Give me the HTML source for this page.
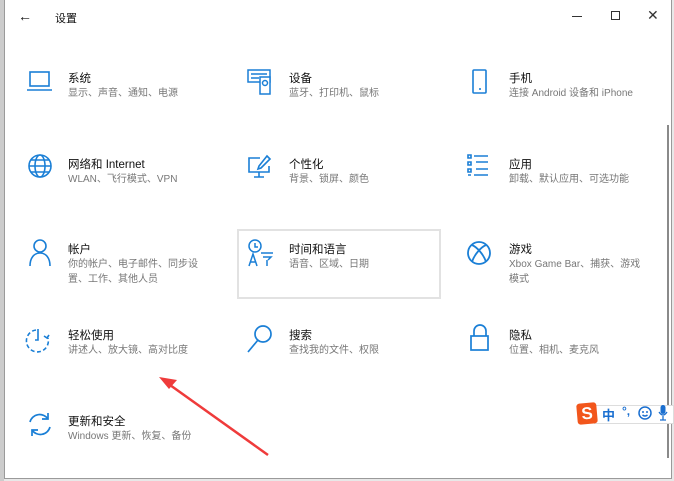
<!DOCTYPE html>
<html><head><meta charset="utf-8"><style>
*{margin:0;padding:0;box-sizing:border-box}
body{width:674px;height:481px;background:#e8e8e8;position:relative;overflow:hidden;font-family:"Liberation Sans","Noto Sans CJK SC",sans-serif}
.win{position:absolute;left:4px;top:0;width:668px;height:479px;background:#fff;border:1px solid #9a9a9a;border-top:none}
.t{position:absolute;font-size:11.5px;color:#111;white-space:nowrap}
.s{position:absolute;font-size:10px;color:#777;white-space:nowrap;line-height:15px}
svg.i{position:absolute;overflow:visible}
</style></head><body>
<div class="win"></div>
<div style="position:absolute;left:0;top:0;width:4px;height:481px;background:#ccc"></div>
<div class="t" style="left:18px;top:8px;font-size:14px">←</div>
<div class="t" style="left:55px;top:10px;font-size:11px">设置</div>
<div style="position:absolute;left:572px;top:16px;width:10px;height:1px;background:#333"></div>
<div style="position:absolute;left:611px;top:11px;width:9px;height:9px;border:1px solid #333"></div>
<div class="t" style="left:647px;top:7px;font-size:14px;color:#333">✕</div>
<div style="position:absolute;left:667px;top:125px;width:2px;height:333px;background:#8a8a8a"></div>

<div style="position:absolute;left:237px;top:229px;width:204px;height:70px;border:2px solid #e2e2e2"></div>

<svg class="i" style="left:27px;top:70px" width="26" height="24" fill="none" stroke="#1a7fd6" stroke-width="1.6"><rect x="3" y="2" width="19" height="14"/><path d="M0 20h25"/></svg>
<div class="t" style="left:68px;top:70px">系统</div><div class="s" style="left:68px;top:86px">显示、声音、通知、电源</div>
<svg class="i" style="left:247px;top:69px" width="26" height="26" fill="none" stroke="#1a7fd6" stroke-width="1.5"><rect x="1" y="1" width="22" height="12"/><path d="M4 5h16M4 9h8"/><rect x="13" y="8" width="10" height="17" fill="#fff"/><circle cx="18" cy="14" r="2.5"/></svg>
<div class="t" style="left:289px;top:70px">设备</div><div class="s" style="left:289px;top:86px">蓝牙、打印机、鼠标</div>
<svg class="i" style="left:472px;top:69px" width="16" height="26" fill="none" stroke="#1a7fd6" stroke-width="1.6"><rect x="1" y="1" width="13" height="23" rx="1"/><path d="M7 20h2"/></svg>
<div class="t" style="left:509px;top:70px">手机</div><div class="s" style="left:509px;top:86px">连接 Android 设备和 iPhone</div>

<svg class="i" style="left:28px;top:154px" width="26" height="26" fill="none" stroke="#1a7fd6" stroke-width="1.6"><circle cx="12" cy="12" r="11"/><ellipse cx="12" cy="12" rx="5" ry="11"/><path d="M1 12h22M3 6h18M3 18h18"/></svg>
<div class="t" style="left:68px;top:156px">网络和 Internet</div><div class="s" style="left:68px;top:172px">WLAN、飞行模式、VPN</div>
<svg class="i" style="left:247px;top:155px" width="26" height="26" fill="none" stroke="#1a7fd6" stroke-width="1.6"><path d="M13 3H2v14h20V11M12 17v5M7 22h10"/><path d="M20 1l3 3-9 9-3 1 1-3z"/></svg>
<div class="t" style="left:289px;top:156px">个性化</div><div class="s" style="left:289px;top:172px">背景、锁屏、颜色</div>
<svg class="i" style="left:467px;top:153px" width="26" height="26" fill="none" stroke="#1a7fd6" stroke-width="1.6"><path d="M1 2h3v3H1zM1 9h3v3H1zM1 16h3v3H1zM1 22h3"/><path d="M7 3h14M9 9h12M9 16h12M7 22h14"/></svg>
<div class="t" style="left:509px;top:156px">应用</div><div class="s" style="left:509px;top:172px">卸载、默认应用、可选功能</div>

<svg class="i" style="left:29px;top:239px" width="24" height="28" fill="none" stroke="#1a7fd6" stroke-width="1.6"><circle cx="11" cy="7" r="6"/><path d="M1 27c0-8 4-13 10-13s10 5 10 13"/></svg>
<div class="t" style="left:68px;top:241px">帐户</div><div class="s" style="left:68px;top:257px">你的帐户、电子邮件、同步设<br>置、工作、其他人员</div>
<svg class="i" style="left:248px;top:239px" width="26" height="28" fill="none" stroke="#1a7fd6" stroke-width="1.5"><circle cx="7" cy="7" r="6"/><path d="M7 4v4h3"/><path d="M1 27l4-12 4 12M2.5 23h5"/><path d="M13 14h12M15 18h8l-3 3M19 21v6"/></svg>
<div class="t" style="left:289px;top:241px">时间和语言</div><div class="s" style="left:289px;top:257px">语音、区域、日期</div>
<svg class="i" style="left:467px;top:241px" width="26" height="26" fill="none" stroke="#1a7fd6" stroke-width="1.8"><circle cx="12" cy="12" r="11"/><path d="M5 4c5 2 12 10 14 17M19 4c-5 2-12 10-14 17"/></svg>
<div class="t" style="left:509px;top:241px">游戏</div><div class="s" style="left:509px;top:257px">Xbox Game Bar、捕获、游戏<br>模式</div>

<svg class="i" style="left:26px;top:328px" width="26" height="26" fill="none" stroke="#1a7fd6" stroke-width="1.6"><path d="M10 2a11 11 0 1 0 12 8" stroke-dasharray="4 2.5"/><path d="M12 1v11h-3M18 8l3 2 2-3"/></svg>
<div class="t" style="left:68px;top:327px">轻松使用</div><div class="s" style="left:68px;top:343px">讲述人、放大镜、高对比度</div>
<svg class="i" style="left:247px;top:325px" width="26" height="28" fill="none" stroke="#1a7fd6" stroke-width="1.7"><circle cx="16" cy="9" r="8"/><path d="M11 15L1 27"/></svg>
<div class="t" style="left:289px;top:327px">搜索</div><div class="s" style="left:289px;top:343px">查找我的文件、权限</div>
<svg class="i" style="left:470px;top:324px" width="20" height="28" fill="none" stroke="#1a7fd6" stroke-width="1.7"><path d="M4 12V7a6 6 0 0 1 12 0v5"/><rect x="1" y="12" width="17" height="14"/></svg>
<div class="t" style="left:509px;top:327px">隐私</div><div class="s" style="left:509px;top:343px">位置、相机、麦克风</div>

<svg class="i" style="left:27px;top:412px" width="26" height="26" fill="none" stroke="#1a7fd6" stroke-width="1.7"><path d="M3 10a10 10 0 0 1 18-3M23 15a10 10 0 0 1-18 3"/><path d="M21 1v6h-6M5 24v-6h6"/></svg>
<div class="t" style="left:68px;top:413px">更新和安全</div><div class="s" style="left:68px;top:429px">Windows 更新、恢复、备份</div>

<svg class="i" style="left:0;top:0" width="674" height="481"><line x1="268" y1="455" x2="170" y2="385" stroke="#ef3b3b" stroke-width="2.5"/><path d="M159 377l18 3-8 9z" fill="#ef3b3b"/></svg>

<div style="position:absolute;left:594px;top:405px;width:80px;height:19px;background:#fff;border:1px solid #ddd"></div>
<div style="position:absolute;left:577px;top:403px;width:20px;height:21px;background:#f2561c;border-radius:3px;transform:rotate(-5deg);color:#fff;font-weight:bold;font-size:17px;text-align:center;line-height:21px">S</div>
<div class="t" style="left:602px;top:405px;color:#1a6fd0;font-size:13px;font-weight:bold">中</div>
<div class="t" style="left:622px;top:404px;color:#1a6fd0;font-size:12px;font-weight:bold">°,</div>
<svg class="i" style="left:638px;top:406px" width="14" height="14" fill="none" stroke="#1a6fd0" stroke-width="1.5"><circle cx="7" cy="7" r="6"/><path d="M5 5v2M9 5v2M4.5 9q2.5 2 5 0"/></svg>
<svg class="i" style="left:658px;top:405px" width="10" height="16" fill="#1a6fd0"><rect x="2.5" y="0" width="5" height="9" rx="2.5"/><path d="M1 7q4 6 8 0M5 11v4M2 15h6" stroke="#1a6fd0" fill="none" stroke-width="1.3"/></svg>
</body></html>
